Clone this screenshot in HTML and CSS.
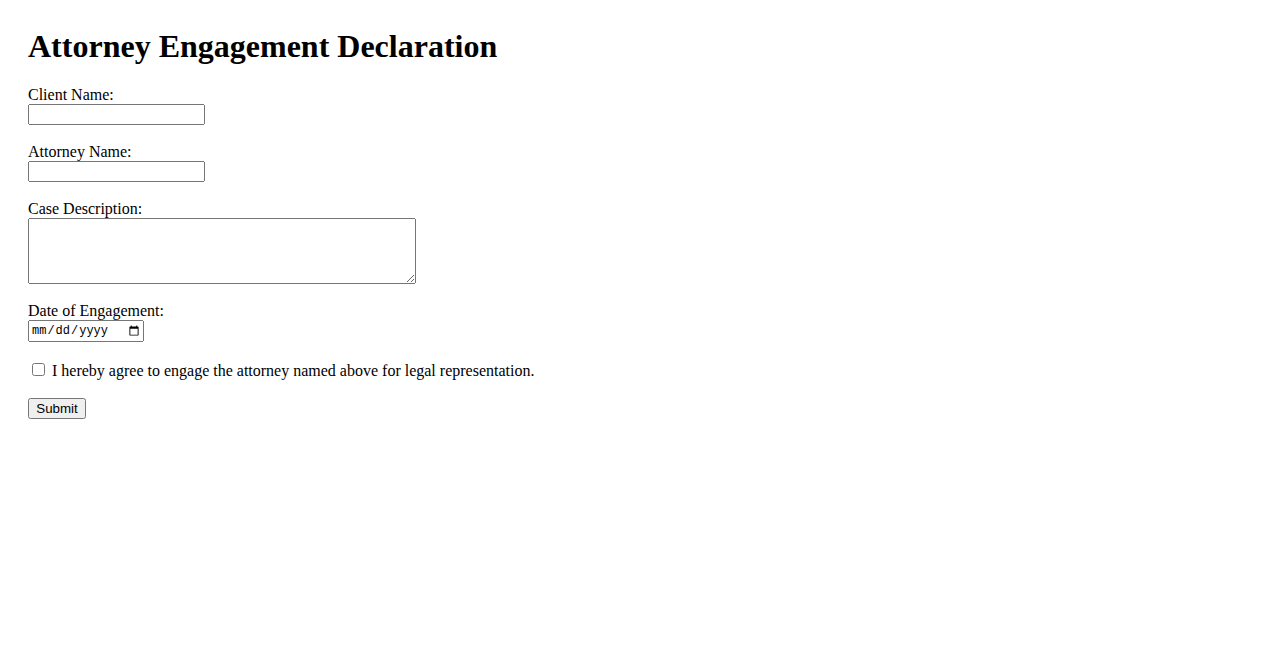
FILE: index.html
```html
<!DOCTYPE html>
<html lang="en">
<head>
<meta charset="utf-8">
<title>Attorney Engagement Declaration</title>
<link rel="stylesheet" href="styles.css">
</head>
<body>
<h1 class="title">Attorney Engagement Declaration</h1>
<form class="form">
  <div class="field">
    <label class="label" for="client">Client Name:</label>
    <input class="text-input" type="text" id="client">
  </div>
  <div class="field">
    <label class="label" for="attorney">Attorney Name:</label>
    <input class="text-input" type="text" id="attorney">
  </div>
  <div class="field">
    <label class="label" for="case">Case Description:</label>
    <textarea class="text-area" id="case"></textarea>
  </div>
  <div class="field">
    <label class="label" for="date">Date of Engagement:</label>
    <input class="date-input" type="date" id="date">
  </div>
  <div class="field agree"><input class="check" type="checkbox" id="agree"> <label for="agree">I hereby agree to engage the attorney named above for legal representation.</label></div>
  <div class="field">
    <button class="submit" type="submit">Submit</button>
  </div>
</form>
</body>
</html>
```

FILE: styles.css
```css
html, body {
  background: #ffffff;
}
body {
  margin: 0;
  padding: 28px;
  font-family: "Liberation Serif", "Times New Roman", serif;
  font-size: 16px;
  color: #000000;
}
.title {
  margin: 0 0 21px;
  font-size: 32px;
  line-height: 37px;
  font-weight: bold;
}
.form {
  margin: 0;
}
.field {
  margin-bottom: 18px;
}
.label {
  display: block;
  line-height: 18px;
}
.text-input {
  display: block;
  box-sizing: border-box;
  width: 177px;
  height: 21px;
  margin: 0;
}
.text-area {
  display: block;
  box-sizing: border-box;
  width: 388px;
  height: 66px;
  margin: 0;
}
.date-input {
  display: block;
  box-sizing: border-box;
  width: 116px;
  height: 22px;
  margin: 0;
  font-family: "Liberation Mono", monospace;
  font-size: 12px;
}
.agree {
  line-height: 18px;
}
.check {
  margin: 3px 3px 3px 4px;
}
.submit {
  box-sizing: border-box;
  width: 58px;
  height: 21px;
  margin: 0;
  padding: 1px 6px;
  font-family: "Liberation Sans", Arial, sans-serif;
  font-size: 13.33px;
}
```
